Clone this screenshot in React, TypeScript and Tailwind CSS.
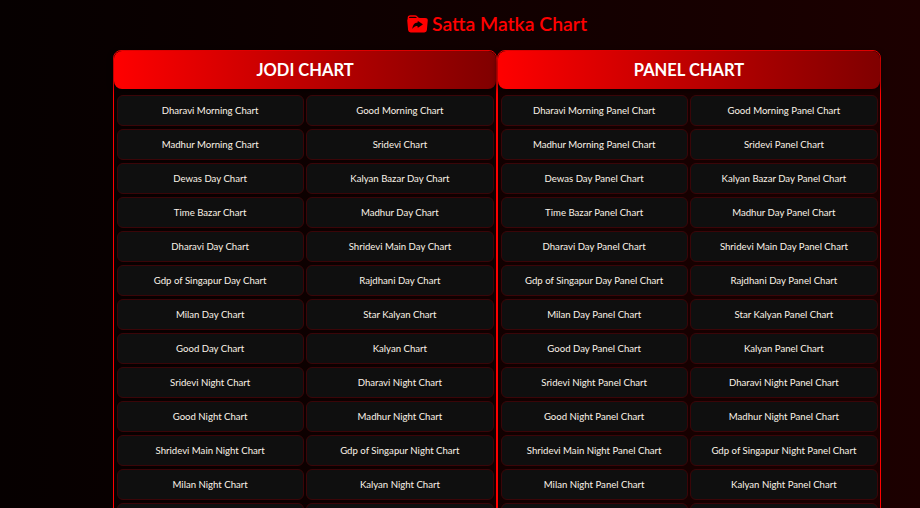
import { BsFolderSymlinkFill } from "react-icons/bs"

const places: [string, string][] = [
  ["Dharavi Morning", "Good Morning"],
  ["Madhur Morning", "Sridevi"],
  ["Dewas Day", "Kalyan Bazar Day"],
  ["Time Bazar", "Madhur Day"],
  ["Dharavi Day", "Shridevi Main Day"],
  ["Gdp of Singapur Day", "Rajdhani Day"],
  ["Milan Day", "Star Kalyan"],
  ["Good Day", "Kalyan"],
  ["Sridevi Night", "Dharavi Night"],
  ["Good Night", "Madhur Night"],
  ["Shridevi Main Night", "Gdp of Singapur Night"],
  ["Milan Night", "Kalyan Night"],
]

function ChartCard({ title, suffix }: { title: string; suffix: string }) {
  return (
    <section className="w-[384px] border border-[#ff0000] rounded-lg">
      <h2 className="h-[38px] flex items-center justify-center pt-px rounded-lg bg-gradient-to-r from-[#ff0000] to-[#800000] text-white text-[16.5px] font-bold shadow-[0_2px_6px_rgba(0,0,0,0.6)]">
        {title}
      </h2>
      <div className="grid grid-cols-2 gap-x-[2.5px] gap-y-[3px] px-[2.5px] pt-[6px]">
        {places.flat().map((place) => (
          <a
            key={place}
            className="h-[31px] flex items-center justify-center pt-px rounded-md border border-[#3a0508] bg-[#0f0f0f] text-[#fbf3e8] text-[9.6px]"
          >
            {place} {suffix}
          </a>
        ))}
        <div className="h-[31px] rounded-md border border-[#3a0508] bg-[#0f0f0f]" />
        <div className="h-[31px] rounded-md border border-[#3a0508] bg-[#0f0f0f]" />
      </div>
    </section>
  )
}

export default function App() {
  return (
    <div
      className="h-screen overflow-hidden bg-gradient-to-r from-[#060000] to-[#1c0000] pt-[10px]"
      style={{ fontFamily: 'Lato, "Open Sans", sans-serif' }}
    >
      <div className="w-[768px] ml-[113px]">
        <h1 className="h-[28px] flex items-center justify-center gap-[4px] text-[#ff0000] text-[19.4px] font-semibold">
          <BsFolderSymlinkFill className="w-[21px] h-[21px]" />
          Satta Matka Chart
        </h1>
        <main className="flex mt-[12px]">
          <ChartCard title="JODI CHART" suffix="Chart" />
          <ChartCard title="PANEL CHART" suffix="Panel Chart" />
        </main>
      </div>
    </div>
  )
}
